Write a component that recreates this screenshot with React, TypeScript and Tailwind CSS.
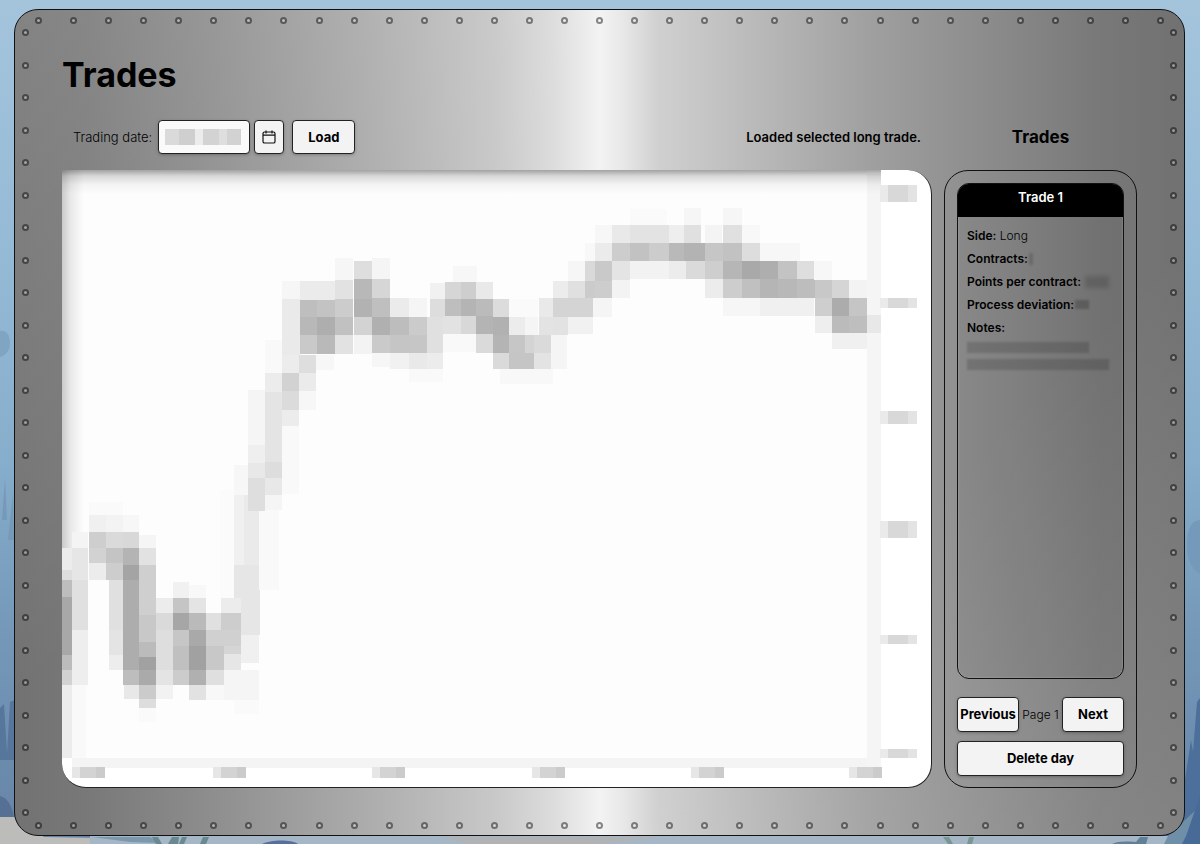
import React, { useState } from "react";

type Cell = [number, number, number, number, string];

// price line, drawn as coarse blocks: x, y, width, height, fill
const cells: Cell[] = [
  // first drop
  [62, 548, 10, 22, "#ececec"],
  [62, 570, 10, 10, "#dedede"],
  [62, 580, 10, 17, "#bdbdbd"],
  [62, 597, 10, 58, "#a8a8a8"],
  [62, 655, 10, 15, "#bcbcbc"],
  [62, 670, 10, 15, "#d2d2d2"],
  [62, 685, 10, 73, "#ececec"],
  [72, 532, 16, 16, "#f4f4f4"],
  [72, 548, 16, 32, "#e6e6e6"],
  [72, 580, 16, 50, "#e0e0e0"],
  [72, 630, 16, 55, "#eeeeee"],
  [72, 685, 14, 73, "#f9f9f9"],
  [89, 502, 34, 13, "#fafafa"],
  [89, 515, 17, 17, "#f0f0f0"],
  [106, 515, 17, 17, "#f3f3f3"],
  [89, 532, 17, 16, "#cecece"],
  [106, 532, 17, 16, "#dadada"],
  [89, 548, 17, 15, "#d2d2d2"],
  [106, 548, 17, 15, "#c4c4c4"],
  [123, 515, 16, 17, "#f7f7f7"],
  [123, 532, 16, 16, "#d8d8d8"],
  [123, 548, 16, 17, "#b4b4b4"],
  [89, 563, 17, 17, "#ececec"],
  [106, 563, 17, 17, "#cdcdcd"],
  [123, 565, 16, 15, "#a4a4a4"],
  [109, 580, 14, 50, "#e0e0e0"],
  [109, 630, 14, 25, "#e4e4e4"],
  [109, 655, 14, 15, "#ededed"],
  [123, 580, 16, 90, "#adadad"],
  [123, 670, 16, 15, "#bdbdbd"],
  [124, 685, 15, 14, "#e8e8e8"],
  [139, 535, 17, 13, "#f5f5f5"],
  [139, 548, 17, 17, "#e2e2e2"],
  [139, 565, 17, 50, "#cfcfcf"],
  [139, 615, 17, 27, "#c8c8c8"],
  [139, 642, 17, 15, "#bbbbbb"],
  [139, 657, 17, 13, "#a1a1a1"],
  [139, 670, 17, 15, "#aaaaaa"],
  [139, 685, 17, 14, "#cbcbcb"],
  [139, 699, 17, 9, "#dddddd"],
  [139, 708, 17, 14, "#fafafa"],
  // second bottom
  [156, 598, 17, 15, "#ececec"],
  [156, 613, 17, 17, "#dadada"],
  [156, 630, 17, 40, "#dedede"],
  [156, 670, 17, 15, "#e4e4e4"],
  [156, 685, 17, 14, "#f2f2f2"],
  [173, 582, 16, 16, "#f1f1f1"],
  [173, 598, 16, 15, "#c5c5c5"],
  [173, 613, 16, 17, "#a6a6a6"],
  [173, 630, 16, 16, "#c6c6c6"],
  [173, 646, 16, 24, "#c0c0c0"],
  [173, 670, 16, 15, "#cccccc"],
  [189, 585, 17, 13, "#f8f8f8"],
  [189, 598, 17, 15, "#e4e4e4"],
  [189, 613, 17, 17, "#bababa"],
  [189, 630, 17, 16, "#a9a9a9"],
  [189, 646, 17, 24, "#a1a1a1"],
  [189, 670, 17, 15, "#b0b0b0"],
  [189, 685, 17, 15, "#e2e2e2"],
  [206, 613, 15, 17, "#e0e0e0"],
  [206, 630, 15, 16, "#d0d0d0"],
  [206, 646, 18, 24, "#c8c8c8"],
  [206, 670, 18, 15, "#dfdfdf"],
  [206, 685, 18, 15, "#f8f8f8"],
  [221, 598, 20, 15, "#ececec"],
  [221, 613, 20, 17, "#cdcdcd"],
  [221, 630, 20, 16, "#d0d0d0"],
  [224, 646, 17, 8, "#d5d5d5"],
  [224, 654, 17, 16, "#e6e6e6"],
  [224, 670, 17, 30, "#f5f5f5"],
  // climb
  [220, 490, 14, 108, "#fbfbfb"],
  [234, 465, 14, 30, "#f7f7f7"],
  [234, 495, 10, 70, "#f0f0f0"],
  [234, 565, 10, 33, "#e6e6e6"],
  [244, 495, 16, 70, "#eaeaea"],
  [241, 565, 19, 70, "#e6e6e6"],
  [241, 635, 18, 28, "#f0f0f0"],
  [234, 670, 25, 30, "#f5f5f5"],
  [234, 700, 25, 14, "#fafafa"],
  [259, 510, 20, 80, "#f9f9f9"],
  [248, 390, 17, 55, "#f5f5f5"],
  [248, 445, 17, 18, "#efefef"],
  [248, 463, 17, 15, "#e8e8e8"],
  [248, 478, 17, 33, "#dedede"],
  [265, 373, 17, 19, "#ececec"],
  [265, 392, 17, 70, "#e4e4e4"],
  [265, 462, 17, 16, "#dddddd"],
  [265, 478, 17, 17, "#e8e8e8"],
  [265, 495, 17, 15, "#f5f5f5"],
  [282, 355, 17, 18, "#ececec"],
  [282, 373, 17, 18, "#d2d2d2"],
  [282, 391, 17, 19, "#dbdbdb"],
  [282, 410, 17, 16, "#ececec"],
  [282, 426, 17, 68, "#f9f9f9"],
  [299, 373, 17, 18, "#ebebeb"],
  [299, 391, 17, 19, "#f7f7f7"],
  [265, 340, 17, 33, "#f9f9f9"],
  [282, 281, 18, 18, "#f6f6f6"],
  [282, 299, 18, 56, "#eaeaea"],
  [299, 355, 17, 18, "#dedede"],
  [316, 355, 18, 15, "#f7f7f7"],
  // first high
  [300, 281, 35, 19, "#ebebeb"],
  [300, 300, 17, 17, "#bebebe"],
  [317, 300, 18, 17, "#c3c3c3"],
  [300, 317, 17, 18, "#b8b8b8"],
  [317, 317, 18, 18, "#aeaeae"],
  [300, 335, 17, 19, "#c9c9c9"],
  [317, 335, 18, 19, "#b9b9b9"],
  [335, 258, 18, 22, "#f6f6f6"],
  [335, 280, 18, 19, "#e2e2e2"],
  [335, 299, 18, 18, "#cccccc"],
  [335, 317, 18, 18, "#c1c1c1"],
  [335, 335, 18, 19, "#e2e2e2"],
  [354, 261, 18, 18, "#dedede"],
  [354, 279, 18, 20, "#b8b8b8"],
  [354, 299, 18, 18, "#b2b2b2"],
  [354, 317, 18, 18, "#d3d3d3"],
  [354, 335, 18, 19, "#f3f3f3"],
  [372, 258, 18, 21, "#f5f5f5"],
  [372, 279, 18, 19, "#d6d6d6"],
  [372, 298, 18, 19, "#bfbfbf"],
  [372, 317, 18, 18, "#b0b0b0"],
  [372, 335, 18, 18, "#cacaca"],
  [372, 353, 18, 14, "#f6f6f6"],
  [390, 298, 19, 19, "#ebebeb"],
  [390, 317, 19, 18, "#bdbdbd"],
  [390, 335, 19, 18, "#c5c5c5"],
  [390, 353, 19, 16, "#f1f1f1"],
  [409, 298, 18, 19, "#f5f5f5"],
  [409, 317, 18, 18, "#cbcbcb"],
  [409, 335, 18, 18, "#c6c6c6"],
  [409, 353, 18, 16, "#e9e9e9"],
  [427, 317, 16, 36, "#e0e0e0"],
  [427, 353, 16, 16, "#ececec"],
  [409, 369, 34, 13, "#f9f9f9"],
  // second high
  [430, 283, 15, 16, "#f1f1f1"],
  [430, 299, 15, 18, "#dddddd"],
  [453, 266, 24, 16, "#f7f7f7"],
  [445, 282, 16, 17, "#d6d6d6"],
  [461, 282, 15, 17, "#cecece"],
  [445, 299, 16, 17, "#bebebe"],
  [461, 299, 15, 17, "#b4b4b4"],
  [443, 316, 18, 18, "#e2e2e2"],
  [461, 316, 16, 18, "#d8d8d8"],
  [443, 334, 34, 18, "#f9f9f9"],
  [476, 282, 17, 17, "#e9e9e9"],
  [476, 299, 17, 17, "#bbbbbb"],
  [476, 316, 17, 18, "#b4b4b4"],
  [476, 334, 17, 19, "#dadada"],
  [493, 299, 16, 18, "#dcdcdc"],
  [493, 317, 16, 18, "#b1b1b1"],
  [493, 335, 16, 18, "#b4b4b4"],
  [493, 353, 16, 16, "#dadada"],
  [509, 299, 29, 18, "#fafafa"],
  [509, 317, 16, 18, "#ececec"],
  [525, 317, 13, 18, "#f5f5f5"],
  [509, 335, 16, 18, "#c6c6c6"],
  [525, 335, 9, 18, "#d4d4d4"],
  [509, 353, 25, 16, "#c5c5c5"],
  [534, 335, 17, 18, "#dadada"],
  [534, 353, 17, 16, "#e3e3e3"],
  [551, 335, 16, 34, "#f5f5f5"],
  [500, 369, 53, 15, "#f8f8f8"],
  // run to the top
  [539, 298, 14, 19, "#e9e9e9"],
  [539, 317, 14, 18, "#e3e3e3"],
  [553, 281, 15, 17, "#ececec"],
  [553, 298, 40, 19, "#d4d4d4"],
  [553, 317, 15, 18, "#e2e2e2"],
  [568, 317, 25, 17, "#f1f1f1"],
  [568, 281, 17, 17, "#e0e0e0"],
  [568, 261, 17, 20, "#f6f6f6"],
  [585, 261, 10, 20, "#d9d9d9"],
  [595, 261, 17, 20, "#c9c9c9"],
  [585, 281, 10, 17, "#cbcbcb"],
  [595, 281, 17, 17, "#cdcdcd"],
  [593, 298, 19, 19, "#f5f5f5"],
  [585, 243, 10, 18, "#f8f8f8"],
  [595, 243, 17, 18, "#ebebeb"],
  [595, 225, 17, 18, "#f7f7f7"],
  [612, 225, 18, 18, "#e9e9e9"],
  [612, 243, 18, 18, "#cdcdcd"],
  [612, 261, 18, 19, "#e4e4e4"],
  [612, 280, 18, 18, "#f3f3f3"],
  [630, 209, 37, 16, "#fafafa"],
  [630, 225, 39, 18, "#e3e3e3"],
  [630, 243, 19, 18, "#c2c2c2"],
  [649, 243, 20, 18, "#cccccc"],
  [630, 261, 39, 18, "#f2f2f2"],
  [669, 225, 15, 18, "#eeeeee"],
  [669, 243, 15, 18, "#b9b9b9"],
  [669, 261, 17, 18, "#ececec"],
  [684, 208, 17, 17, "#f6f6f6"],
  [684, 225, 17, 18, "#e0e0e0"],
  [684, 243, 21, 18, "#b3b3b3"],
  [686, 261, 19, 18, "#dadada"],
  [705, 225, 17, 18, "#f4f4f4"],
  [705, 243, 18, 18, "#c6c6c6"],
  [705, 261, 18, 18, "#cecece"],
  [705, 279, 18, 19, "#ececec"],
  [723, 208, 19, 17, "#f6f6f6"],
  [723, 225, 19, 18, "#e0e0e0"],
  [723, 243, 19, 18, "#c2c2c2"],
  [723, 261, 19, 18, "#b6b6b6"],
  [723, 279, 19, 19, "#cdcdcd"],
  [723, 298, 37, 18, "#f6f6f6"],
  // slide down
  [742, 225, 18, 18, "#f8f8f8"],
  [742, 243, 18, 18, "#dddddd"],
  [742, 261, 18, 18, "#a9a9a9"],
  [742, 279, 18, 19, "#c0c0c0"],
  [760, 243, 40, 18, "#f7f7f7"],
  [760, 261, 18, 18, "#aeaeae"],
  [760, 279, 18, 19, "#b5b5b5"],
  [760, 298, 54, 18, "#f0f0f0"],
  [778, 261, 19, 18, "#c3c3c3"],
  [778, 279, 19, 19, "#b8b8b8"],
  [797, 261, 17, 18, "#dedede"],
  [797, 279, 18, 19, "#bdbdbd"],
  [814, 261, 18, 19, "#f7f7f7"],
  [815, 280, 17, 18, "#c8c8c8"],
  [815, 298, 17, 18, "#cecece"],
  [815, 316, 17, 17, "#eeeeee"],
  [832, 280, 17, 18, "#d5d5d5"],
  [832, 298, 17, 18, "#acacac"],
  [832, 316, 17, 17, "#bbbbbb"],
  [832, 333, 35, 16, "#f0f0f0"],
  [849, 280, 18, 18, "#f3f3f3"],
  [849, 298, 18, 18, "#c5c5c5"],
  [849, 316, 18, 17, "#bebebe"],
  // axis strips
  [867, 174, 14, 141, "#f5f5f5"],
  [867, 315, 14, 18, "#e8e8e8"],
  [867, 333, 14, 435, "#f5f5f5"],
  [72, 758, 795, 10, "#f4f4f4"],
];

const priceLabels: [number, number][] = [
  [185, 17],
  [298, 10],
  [411, 13],
  [521, 17],
  [635, 9],
  [749, 9],
];

const timeLabels = [72, 213, 372, 532, 691, 849];

const columns = Array.from({ length: 33 }, (_, i) => i);
const rows = Array.from({ length: 25 }, (_, i) => i);

const boxButton =
  "rounded border border-[#222] bg-[#f3f3f3] text-[13px] font-bold text-black shadow-[0_1px_3px_rgba(0,0,0,0.25)] cursor-pointer";

function Rivet() {
  return <span className="block size-[7px] shrink-0 rounded-full border-2 border-black/45 bg-white/30 bg-clip-padding" />;
}

function Rivets() {
  return (
    <div className="pointer-events-none absolute inset-0" aria-hidden="true">
      <div className="absolute inset-x-5 top-[7px] flex justify-between">
        {columns.map((i) => <Rivet key={i} />)}
      </div>
      <div className="absolute inset-x-5 bottom-[6px] flex justify-between">
        {columns.map((i) => <Rivet key={i} />)}
      </div>
      <div className="absolute inset-y-[19px] left-[7px] flex flex-col justify-between">
        {rows.map((i) => <Rivet key={i} />)}
      </div>
      <div className="absolute inset-y-[19px] right-[7px] flex flex-col justify-between">
        {rows.map((i) => <Rivet key={i} />)}
      </div>
    </div>
  );
}

function Ocean() {
  return (
    <svg
      className="absolute inset-0 h-full w-full"
      viewBox="0 0 1200 844"
      preserveAspectRatio="none"
      aria-hidden="true"
    >
      <defs>
        <linearGradient id="water" x1="0" y1="0" x2="0" y2="1">
          <stop offset="0" stopColor="#a4c4dc" />
          <stop offset="0.3" stopColor="#95bad6" />
          <stop offset="0.55" stopColor="#86adcb" />
          <stop offset="0.75" stopColor="#7598b9" />
          <stop offset="1" stopColor="#6583a6" />
        </linearGradient>
      </defs>
      <rect width="1200" height="844" fill="url(#water)" />
      <path d="M0 331c6-1 10 4 10 12s-4 12-10 14z" fill="#7fa5c2" />
      <path d="M2 520l3-42 2 42zM8 540l5-46 1 46z" fill="#7799b8" />
      <path d="M1200 520c-8 0-13 8-13 24s4 24 13 30z" fill="#7599bb" />
      <path d="M0 708l4-4 3 50 3-52 5-2v60H0z" fill="#56769b" />
      <path d="M0 796c8 2 12 10 14 22H0z" fill="#566f95" />
      <path d="M1185 780l6-40 2 12 4-50 3-4v146h-40z" fill="#4c6f9b" />
      <path d="M0 817h14l30 20 56 1 60 6H0z" fill="#bcbdba" />
      <rect x="90" y="836" width="1110" height="8" fill="#a5b7c6" />
      <path d="M92 837h58l10 6-30-1z" fill="#7b98ad" />
      <path d="M152 837h6l4 7h-6zM168 844l4-7h7l-1 7zM182 837h5l-3 7h-5zM200 844l3-7h6l-3 7z" fill="#68898f" />
      <path d="M262 844c8-4 28-5 36 0z" fill="#566f9c" />
      <path d="M440 837h220l-60 7H470z" fill="#b0b2b4" />
      <path d="M943 837h6l4 7h-5zM974 837h-5l-2 7h5z" fill="#789793" />
      <path d="M1112 844c4-3 18-3 24-2l4-5h8l-2 7z" fill="#617f96" />
      <path d="M1168 836l32-30v38h-36z" fill="#6f8fa9" />
      <path d="M1186 836l14-40v48h-18z" fill="#476a97" />
    </svg>
  );
}

function Chart() {
  return (
    <svg
      className="block h-full w-full"
      viewBox="62 170 869 617"
      preserveAspectRatio="none"
      shapeRendering="crispEdges"
      role="img"
      aria-label="Price chart"
    >
      <defs>
        <linearGradient id="topShade" x1="0" y1="0" x2="0" y2="1">
          <stop offset="0" stopColor="#000" stopOpacity="0.36" />
          <stop offset="0.25" stopColor="#000" stopOpacity="0.15" />
          <stop offset="0.6" stopColor="#000" stopOpacity="0.04" />
          <stop offset="1" stopColor="#000" stopOpacity="0" />
        </linearGradient>
        <linearGradient id="leftShade" x1="0" y1="0" x2="1" y2="0">
          <stop offset="0" stopColor="#000" stopOpacity="0.2" />
          <stop offset="0.4" stopColor="#000" stopOpacity="0.08" />
          <stop offset="1" stopColor="#000" stopOpacity="0" />
        </linearGradient>
      </defs>
      <rect x="62" y="170" width="805" height="588" fill="#fdfdfd" />
      <rect x="62" y="170" width="22" height="378" fill="url(#leftShade)" />
      {cells.map(([x, y, w, h, fill], i) => (
        <rect key={i} x={x} y={y} width={w} height={h} fill={fill} />
      ))}
      <rect x="62" y="170" width="819" height="24" fill="url(#topShade)" />
      {priceLabels.map(([y, h]) => (
        <g key={y}>
          <rect x="880" y={y} width="8" height={h} fill="#eaeaea" />
          <rect x="888" y={y} width="20" height={h} fill="#d8d8d8" />
          <rect x="908" y={y} width="9" height={h} fill="#e3e3e3" />
        </g>
      ))}
      {timeLabels.map((x) => (
        <g key={x}>
          <rect x={x} y="767" width="8" height="11" fill="#e6e6e6" />
          <rect x={x + 8} y="767" width="16" height="11" fill="#d3d3d3" />
          <rect x={x + 24} y="767" width="9" height="11" fill="#cbcbcb" />
        </g>
      ))}
    </svg>
  );
}

function CalendarIcon() {
  return (
    <svg width="14" height="14" viewBox="0 0 14 14" fill="none" stroke="#111" strokeWidth="1.2" aria-hidden="true">
      <rect x="1" y="2" width="12" height="11" rx="1.6" />
      <path d="M1 5.2h12M4 0.4v3M10 0.4v3" />
    </svg>
  );
}

export default function App() {
  const [page, setPage] = useState(1);
  const [date, setDate] = useState("");

  return (
    <div className="relative min-h-screen overflow-hidden bg-[#8fb4d0] pt-[9px] pr-[15px] pb-2 pl-[14px] font-['Inter',sans-serif] text-[13px] leading-[17px] text-black">
      <Ocean />

      <main className="relative flex min-h-[calc(100vh-17px)] flex-col rounded-[24px] border border-[#111] bg-[linear-gradient(135deg,rgba(255,255,255,0.12),rgba(255,255,255,0)_35%,rgba(255,255,255,0)_70%,rgba(255,255,255,0.12)),linear-gradient(90deg,#727272_0%,#787878_6%,#8c8c8c_16%,#acacac_30%,#c8c8c8_41%,#dcdcdc_46%,#ededed_49%,#f3f3f3_50%,#e8e8e8_52%,#d0d0d0_55%,#bdbdbd_62%,#a0a0a0_73%,#8a8a8a_84%,#787878_93%,#717171_100%)] pt-[45px] pr-[47px] pb-[47px] pl-[47px]">
        <Rivets />

        <h1 className="text-[34px] leading-10 font-bold">Trades</h1>

        <div className="mt-[25px] grid flex-1 grid-cols-[1fr_193px] grid-rows-[34px_1fr] gap-x-3 gap-y-4">
          <div className="flex items-center px-[11px]">
            <label htmlFor="trading-date" className="mr-[6px] font-light">Trading date:</label>
            <div className="relative mr-1">
              <input
                id="trading-date"
                type="text"
                value={date}
                onChange={(e) => setDate(e.target.value)}
                className="block h-[34px] w-[92px] rounded border border-[#222] bg-[#fafafa] px-2 shadow-[0_1px_3px_rgba(0,0,0,0.25)]"
              />
              <div className="pointer-events-none absolute inset-y-[9px] left-[7px] flex" aria-hidden="true">
                <span className="w-[14px] bg-[#dadada]" />
                <span className="w-4 bg-[#cfcfcf]" />
                <span className="w-2 bg-[#ececec]" />
                <span className="w-4 bg-[#d3d3d3]" />
                <span className="w-2 bg-[#dedede]" />
                <span className="w-[14px] bg-[#d2d2d2]" />
              </div>
            </div>
            <button type="button" aria-label="Pick a date" className={boxButton + " mr-2 flex h-[34px] w-[30px] items-center justify-center"}>
              <CalendarIcon />
            </button>
            <button type="button" className={boxButton + " h-[34px] w-[63px]"}>Load</button>
            <p className="ml-auto font-semibold">Loaded selected long trade.</p>
          </div>

          <h2 className="self-center text-center text-[17px] font-bold">Trades</h2>

          <section className="relative overflow-hidden rounded-[24px] rounded-tl-none border-r border-b border-[#222] bg-white">
            <div className="absolute inset-0">
              <Chart />
            </div>
          </section>

          <aside className="flex flex-col rounded-[24px] border border-[#111] p-3 pb-[11px]">
            <article className="flex-1 overflow-hidden rounded-xl border border-[#111] bg-black/5 shadow-[inset_0_0_2px_rgba(255,255,255,0.35)]">
              <h3 className="h-[33px] bg-black pt-[5px] text-center font-semibold text-white">Trade 1</h3>
              <div className="flex flex-col gap-[6px] px-[9px] pt-[10px] text-[12px]">
                <p className="font-light"><b className="font-semibold">Side:</b> Long</p>
                <p className="flex items-center"><b className="font-semibold">Contracts:</b><span className="ml-px h-3 w-1 bg-black/15 blur-[1px]" /></p>
                <p className="flex items-center"><b className="font-semibold">Points per contract:</b><span className="ml-1 h-3 w-6 bg-black/15 blur-[2px]" /></p>
                <p className="flex items-center"><b className="font-semibold">Process deviation:</b><span className="ml-px h-[9px] w-[14px] bg-black/20 blur-[1px]" /></p>
                <div>
                  <p><b className="font-semibold">Notes:</b></p>
                  <div className="mt-[6px] h-[11px] w-[122px] bg-black/15 blur-[1px]" />
                  <div className="mt-[6px] h-[11px] w-[142px] bg-black/15 blur-[1px]" />
                </div>
              </div>
            </article>

            <div className="mt-[18px] flex items-center justify-between">
              <button type="button" className={boxButton + " h-[35px] w-[62px]"} onClick={() => setPage(Math.max(1, page - 1))}>Previous</button>
              <span className="text-[12px] font-light">Page {page}</span>
              <button type="button" className={boxButton + " h-[35px] w-[62px]"} onClick={() => setPage(page + 1)}>Next</button>
            </div>
            <button type="button" className={boxButton + " mt-[9px] h-[35px]"}>Delete day</button>
          </aside>
        </div>
      </main>
    </div>
  );
}
